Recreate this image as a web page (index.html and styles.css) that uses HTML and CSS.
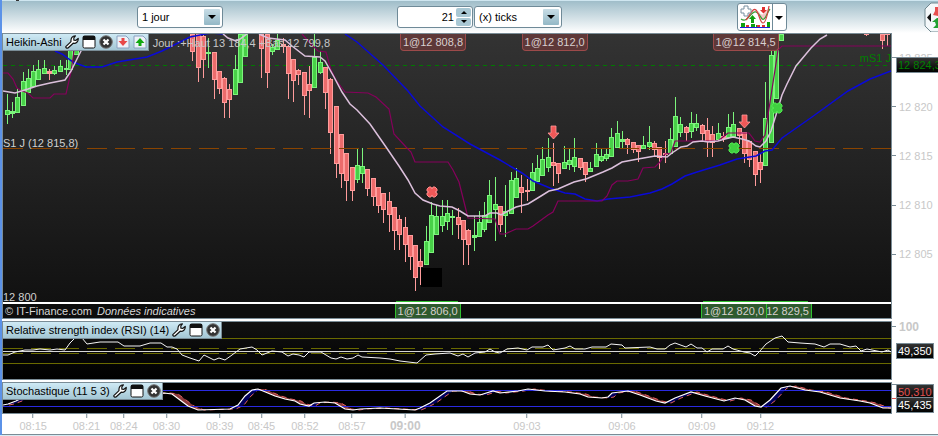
FILE: index.html
```
<!DOCTYPE html>
<html lang="fr">
<head>
  <meta charset="UTF-8" />
  <meta name="viewport" content="width=device-width, initial-scale=1.0">
  <title>Graphique (x) ticks</title>
  <link rel="stylesheet" href="styles.css">
</head>
<body>

  <svg class="symbols" aria-hidden="true">
    <symbol id="wrench" viewBox="0 0 14 14">
      <path d="M0.800 11.600 L6 6.600 C5.600 3.400 7.400 0.700 10.400 0.800 L8.800 2.800 L8.900 5.200 L11 5.300 L13.200 3.400 C13.600 6.600 11 8.800 8.200 8.200 L3 13 C1.800 13.600 0.600 12.700 0.800 11.600 Z" fill="#fff" stroke="#111" stroke-width="1.200" stroke-linejoin="round"/>
    </symbol>
    <symbol id="window" viewBox="0 0 14 14">
      <rect x="1" y="1" width="12" height="12" rx="1.500" fill="#fff" stroke="#111"/>
      <rect x="1" y="1" width="12" height="4" fill="#111"/>
    </symbol>
    <symbol id="close" viewBox="0 0 14 14">
      <circle cx="7" cy="7" r="6.300" fill="#333" stroke="#777"/>
      <path d="M4.500 4.500 L9.500 9.500 M9.500 4.500 L4.500 9.500" stroke="#fff" stroke-width="2.200"/>
    </symbol>
    <symbol id="sell" viewBox="0 0 14 14">
      <path d="M1 1 H10 L13 4 V13 H1 Z" fill="#eef2f8" stroke="#8aa0c0"/>
      <path d="M5.500 3 H8.500 V6 H11.500 L7 11 L2.500 6 H5.500 Z" fill="#e84848"/>
    </symbol>
    <symbol id="buy" viewBox="0 0 14 14">
      <path d="M1 1 H10 L13 4 V13 H1 Z" fill="#eef2f8" stroke="#8aa0c0"/>
      <path d="M5.500 11 H8.500 V8 H11.500 L7 3 L2.500 8 H5.500 Z" fill="#12a812"/>
    </symbol>
  </svg>

  <div class="window">
    <div class="toolbar">
      <span class="select select-period">
        <select aria-label="Période">
          <option>1 jour</option>
        </select>
      </span>
      <div class="unit-group">
        <div class="stepper">
          <input type="text" value="21" aria-label="Nombre de ticks">
          <span class="steps">
            <button class="step step-up" aria-label="Plus"></button>
            <button class="step step-down" aria-label="Moins"></button>
          </span>
        </div>
        <span class="select select-unit">
          <select aria-label="Unité">
            <option>(x) ticks</option>
          </select>
        </span>
      </div>
      <div class="indicator-group">
        <button class="indicator-button" aria-label="Ajouter un indicateur">
          <svg width="32" height="24" viewBox="0 0 32 24">
            <path d="M3 14 C9 18 12 5 17 7 C20 9 20 14 24 15 C27 13 29 7 30 2 C26 9 23 12 20 7 C15 1 11 12 7 15 Z" fill="#f3c6c6"/>
            <path d="M2 14 C9 19 12 5 17 7 S22 16 25 14 S28 7 31 4" fill="none" stroke="#35a035" stroke-width="1.200"/>
            <path d="M7 15 C12 9 14 2 17 5 S21 18 24 18 S29 7 30 1" fill="none" stroke="#d84040" stroke-width="1.200"/>
            <path d="M5 1 H9 V4 H12 V8 H9 V11 H5 V8 H2 V4 H5 Z" fill="#fff" stroke="#7890a0"/>
            <path d="M12 18 V14 H10 L13.500 10 L17 14 H15 V18 Z" fill="#10a010"/>
            <path d="M23 2 H26 V5 H28 L24.500 8.500 L21 5 H23 Z" fill="#e03030"/>
            <path d="M2 18 H6 V22 H2 Z M12 19 H16 V22 H12 Z M17 20 H20 V22 H17 Z M28 17 H31 V22 H28 Z" fill="#10a010"/>
            <path d="M7 20 H10 V22 H7 Z M18 20 H21 V22 H18 Z M23 20 H26 V22 H23 Z" fill="#e03030"/>
            <path d="M1 22.500 H31" stroke="#2020e0"/>
          </svg>
        </button>
        <button class="indicator-more" aria-label="Plus d'indicateurs"></button>
      </div>
      <button class="side-button" aria-label="Passer un ordre">
        <svg width="18" height="30" viewBox="0 0 18 30">
          <path d="M19 1 H7 L1 7 V24 L7 30 H19" fill="#f4f8fa" stroke="#708890"/>
          <path d="M7 11 V20 L3 15.500 Z" fill="#111"/>
          <path d="M11 5 H16 V10 H18 V15 L9 13 L11 9 Z" fill="#e85050"/>
          <path d="M8 20 L13 16 H18 V26 H9 L12 23 L11 20 Z" fill="#20a030"/>
        </svg>
      </button>
    </div>

    <div class="panel">
      <div class="plot price-plot">
        <svg id="price" class="chart" viewBox="3 34 888 268" preserveAspectRatio="none"></svg>
        <div class="head">
          <div class="panel-title">
            <span>Heikin-Ashi</span>
            <svg><use href="#wrench"/></svg>
            <svg><use href="#window"/></svg>
            <svg><use href="#close"/></svg>
            <svg><use href="#sell"/></svg>
            <svg><use href="#buy"/></svg>
          </div>
          <span class="day-range">Jour :+Haut 13 184,4 +Bas 12 799,8</span>
        </div>
        <span class="order order-sell" style="left:44.7%">1@12 808,8</span>
        <span class="order order-sell" style="left:58.4%">1@12 812,0</span>
        <span class="order order-sell" style="left:79.9%">1@12 814,5</span>
        <span class="level level-s1">S1 J (12 815,8)</span>
        <span class="level level-ms1">mS1 J</span>
        <span class="level level-low">12 800</span>
        <div class="credit">
          <span>© IT-Finance.com</span>
          <em>Données indicatives</em>
          <span class="order order-buy" style="left:85.6%">12 829,5</span>
          <span class="order order-buy" style="left:44.1%">1@12 806,0</span>
          <span class="order order-buy" style="left:78.6%">1@12 820,0</span>
        </div>
      </div>
      <div class="scale">
        <span class="tick" style="top:8.6%">12 825</span>
        <span class="tick" style="top:25.8%">12 820</span>
        <span class="tick" style="top:43%">12 815</span>
        <span class="tick" style="top:60.2%">12 810</span>
        <span class="tick" style="top:77.4%">12 805</span>
        <span class="value value-price">12 824,3</span>
      </div>
    </div>

    <div class="panel">
      <div class="plot rsi-plot">
        <svg id="rsi" class="chart" viewBox="3 322 888 57" preserveAspectRatio="none"></svg>
        <div class="head">
          <div class="panel-title">
            <span>Relative strength index (RSI) (14)</span>
            <svg><use href="#wrench"/></svg>
            <svg><use href="#window"/></svg>
            <svg><use href="#close"/></svg>
          </div>
        </div>
      </div>
      <div class="scale">
        <span class="tick tick-strong" style="top:10%">100</span>
        <span class="value value-rsi">49,350</span>
      </div>
    </div>

    <div class="panel">
      <div class="plot stoch-plot">
        <svg id="stoch" class="chart" viewBox="3 383 888 30" preserveAspectRatio="none"></svg>
        <div class="head">
          <div class="panel-title">
            <span>Stochastique (11 5 3)</span>
            <svg><use href="#wrench"/></svg>
            <svg><use href="#window"/></svg>
            <svg><use href="#close"/></svg>
          </div>
        </div>
      </div>
      <div class="scale">
        <span class="tick" style="top:8%"></span>
        <span class="tick tick-red" style="top:50%"></span>
        <span class="value value-d">50,310</span>
        <span class="value value-k">45,435</span>
      </div>
    </div>

    <div class="time-axis">
      <div class="times">
        <span class="time" style="left:3.4%">08:15</span>
        <span class="time" style="left:9.4%">08:21</span>
        <span class="time" style="left:13.6%">08:24</span>
        <span class="time" style="left:18.4%">08:30</span>
        <span class="time" style="left:24.4%">08:39</span>
        <span class="time" style="left:29.1%">08:45</span>
        <span class="time" style="left:34%">08:52</span>
        <span class="time" style="left:39.3%">08:57</span>
        <span class="time time-hour" style="left:45.3%">09:00</span>
        <span class="time" style="left:59%">09:03</span>
        <span class="time" style="left:69.7%">09:06</span>
        <span class="time" style="left:78.7%">09:09</span>
        <span class="time" style="left:85.3%">09:12</span>
      </div>
    </div>
  </div>

  <script src="charts.js"></script>
</body>
</html>
```

FILE: styles.css
```
* {
  box-sizing: border-box;
}

body {
  margin: 0;
  background: #d8ecf4;
  font-family: Arial, "Liberation Sans", sans-serif;
  font-size: 11px;
  color: #000;
}

button {
  padding: 0;
  border: none;
  background: none;
}

.symbols {
  position: absolute;
  width: 0;
  height: 0;
}

.window {
  border-left: 2px solid #5b92e8;
  background: #fff;
}

/* toolbar */
.toolbar {
  position: relative;
  display: grid;
  grid-template-columns: 135px 260px 340px 1fr auto;
  align-items: center;
  height: 33px;
  border-top: 1px solid #cfe6f0;
  background: linear-gradient(#9fbdc9, #fff);
}

.toolbar::before {
  content: "";
  position: absolute;
  top: -1px;
  left: 14px;
  width: 3px;
  height: 1px;
  background: #333;
}

.select {
  position: relative;
  display: block;
  height: 22px;
}

.select-period {
  grid-column: 2;
  width: 86px;
}

.select-unit {
  width: 88px;
}

.select select {
  appearance: none;
  width: 100%;
  height: 22px;
  padding: 0 20px 0 4px;
  border: 1px solid #6f8a98;
  border-radius: 3px;
  background: #fff;
  color: #000;
  font: inherit;
}

.select::before {
  content: "";
  position: absolute;
  top: 3px;
  right: 3px;
  width: 16px;
  height: 16px;
  border-radius: 1px;
  background: linear-gradient(#c8dde6, #93b8c6);
  pointer-events: none;
}

.select::after,
.indicator-more::after {
  content: "";
  position: absolute;
  top: 9px;
  right: 7px;
  border: 4px solid transparent;
  border-top-color: #000;
  border-bottom: none;
  pointer-events: none;
}

.unit-group {
  grid-column: 3;
  display: flex;
  gap: 1px;
}

.stepper {
  display: flex;
  width: 76px;
  height: 22px;
  padding: 1px;
  border: 1px solid #6f8a98;
  border-radius: 3px;
  background: #fff;
}

.stepper input {
  flex: 1;
  min-width: 0;
  padding: 0 2px;
  border: none;
  background: none;
  font: inherit;
  text-align: right;
}

.steps {
  display: flex;
  flex-direction: column;
  gap: 1px;
  width: 15px;
}

.step {
  display: flex;
  flex: 1;
  align-items: center;
  justify-content: center;
  border-radius: 2px;
  background: #a9c8d4;
}

.step::after {
  content: "";
  border: 3px solid transparent;
}

.step-up::after {
  border-bottom-color: #000;
  border-top: none;
}

.step-down::after {
  border-top-color: #000;
  border-bottom: none;
}

.indicator-group {
  grid-column: 4;
  display: flex;
  width: 50px;
  height: 28px;
  border: 1px solid #6f8a98;
  border-radius: 3px;
  background: #fff;
}

.indicator-button {
  display: flex;
  flex: 1;
  align-items: center;
  justify-content: center;
}

.indicator-more {
  position: relative;
  width: 14px;
  border-left: 1px solid #6f8a98;
}

.indicator-more::after {
  top: 12px;
  right: 3px;
}

.side-button {
  display: flex;
  justify-content: flex-start;
  width: 14px;
  overflow: hidden;
}

.side-button svg {
  flex: none;
}

/* panels */
.panel {
  display: grid;
  grid-template-columns: 1fr 46px;
  margin-bottom: 2px;
}

.plot {
  position: relative;
  overflow: hidden;
  border: 1px solid #7a8c96;
}

.chart {
  display: block;
  width: 100%;
}

.price-plot {
  background: linear-gradient(#333, #0f0f0f);
}

.price-plot .chart {
  height: 268px;
}

.rsi-plot {
  background: linear-gradient(#111, #000);
}

.rsi-plot .chart {
  height: 57px;
}

.stoch-plot {
  background: #000;
}

.stoch-plot .chart {
  height: 30px;
}

.head {
  position: absolute;
  top: 0;
  left: 0;
  display: flex;
  align-items: center;
  gap: 4px;
}

.panel-title {
  display: flex;
  align-items: center;
  gap: 3px;
  height: 17px;
  padding: 0 1px 0 3px;
  border-right: 1px solid #7a8c96;
  border-bottom: 1px solid #7a8c96;
  background: linear-gradient(#cfeaf5, #a3c6d4);
}

.panel-title svg {
  width: 14px;
  height: 14px;
}

.day-range {
  color: #c8c8c8;
}

.level {
  position: absolute;
  color: #d0d0d0;
  line-height: 12px;
}

.level-s1 {
  top: 103px;
  left: 0;
}

.level-ms1 {
  top: 18px;
  right: 0;
  color: #008000;
}

.level-low {
  top: 257px;
  left: 0;
}

.order {
  position: absolute;
  top: 0;
  padding: 0 2px;
  line-height: 16px;
  white-space: nowrap;
  color: #d8d0d0;
}

.order-sell {
  border: 1px solid #9c4a4a;
  border-top: none;
  border-radius: 0 0 4px 4px;
  background: #5e3838;
}

.order-buy {
  height: 14px;
  border: 1px solid #30c030;
  border-width: 0 1px;
  background: #2e5a2e;
  line-height: 14px;
}

.credit {
  position: relative;
  display: flex;
  gap: 5px;
  height: 16px;
  padding-left: 2px;
  border-top: 2px solid #fff;
  background: #0d0d0d;
  color: #d8d8d8;
  line-height: 15px;
}

/* right hand scales */
.scale {
  position: relative;
}

.tick {
  position: absolute;
  left: 0;
  display: flex;
  align-items: center;
  gap: 3px;
  height: 14px;
  margin-top: -7px;
  color: #c8c8c8;
}

.tick::before {
  content: "";
  width: 4px;
  height: 1px;
  background: #7a8c96;
}

.tick-red::before {
  background: #e05050;
}

.tick-strong {
  font-size: 12px;
  font-weight: bold;
}

.value {
  position: absolute;
  left: 4px;
  width: 38px;
  height: 16px;
  padding-left: 1px;
  border: 1px solid #7a8c96;
  background: linear-gradient(#333, #000);
  color: #fff;
  line-height: 14px;
  white-space: nowrap;
  overflow: hidden;
}

.value-price {
  top: 24px;
  width: 42px;
  border-right: none;
  color: #008000;
}

.value-rsi {
  top: 22px;
}

.value-d {
  top: 2px;
  color: #e05050;
}

.value-k {
  top: 15px;
}

/* time axis */
.time-axis {
  height: 21px;
  margin-top: -2px;
  padding: 0 47px 0 1px;
  border-bottom: 1px solid #7a8c96;
}

.times {
  position: relative;
}

.time {
  position: absolute;
  top: 0;
  display: flex;
  flex-direction: column;
  align-items: center;
  gap: 2px;
  line-height: 13px;
  color: #c8c8c8;
  transform: translateX(-50%);
}

.time::before {
  content: "";
  width: 1px;
  height: 4px;
  background: #7a8c96;
}

.time-hour {
  font-size: 12px;
  font-weight: bold;
}
```

FILE: charts.js
```
const NS = 'http://www.w3.org/2000/svg';

// x, body top, body bottom, wick top, wick bottom
const up = [
  [7,110,114,94,124],[12,111,113,102,118],[17,97,112,88,112],[23,81,105,72,105],[28,78,92,69,93],
  [33,71,86,65,86],[38,69,79,60,79],[44,68,73,60,73],[54,70,73,66,75],[60,66,71,60,72],[66,68,69,60,75],
  [70,34,69,34,69],[76,34,54,34,54],[208,52,53,38,68],[235,69,94,55,95],[240,34,82,34,83],[245,34,56,34,57],
  [272,47,51,44,55],[277,40,49,34,50],[314,57,87,34,88],[320,62,72,51,74],[357,165,179,149,183],
  [362,166,173,148,183],[426,241,264,226,265],[431,215,252,202,253],[436,216,234,205,235],[442,216,225,200,232],
  [447,213,221,200,230],[452,216,217,210,235],[474,235,237,216,251],[479,222,236,211,237],[484,215,229,202,232],
  [489,195,222,180,223],[495,204,209,177,241],[505,211,215,185,237],[511,180,213,172,214],[516,178,197,168,198],
  [532,172,190,163,191],[537,168,181,155,182],[542,159,175,147,176],[548,157,167,138,172],[564,162,168,146,169],
  [569,160,164,149,170],[574,157,166,138,172],[590,168,171,162,172],[596,154,166,143,167],[601,156,160,149,162],
  [606,154,158,148,161],[611,137,156,128,157],[617,133,147,121,148],[622,139,141,131,149],[643,145,148,136,149],
  [649,142,146,126,150],[670,139,153,128,154],[675,116,146,97,147],[680,124,132,117,137],[691,123,131,112,138],
  [696,123,127,114,131],[718,133,139,123,141],[728,127,137,114,138],[733,124,136,112,138],[765,118,165,82,166],
  [771,55,142,50,143],[776,34,98,34,99],[781,34,40,34,41]
];

const down = [
  [49,71,73,69,80],[192,34,51,34,61],[198,34,67,34,82],[203,36,59,34,78],[214,52,79,52,99],[219,71,88,71,94],
  [224,78,102,77,118],[229,89,99,84,118],[261,34,48,34,78],[267,34,72,34,88],[283,44,46,38,53],[288,46,73,45,99],
  [293,59,80,59,102],[298,70,74,69,85],[304,72,95,72,115],[309,84,90,66,118],[325,67,92,67,109],[330,79,132,78,154],
  [336,106,163,106,178],[341,134,173,134,188],[346,153,180,153,201],[352,167,190,167,201],[367,169,188,169,196],
  [373,178,196,178,206],[378,187,205,187,213],[383,193,209,193,223],[389,201,214,192,232],[394,207,230,207,250],
  [399,219,234,215,250],[405,227,244,217,262],[410,235,256,235,270],[415,245,277,245,291],[420,261,266,249,285],
  [458,217,224,208,239],[463,220,239,220,265],[468,230,244,229,265],[500,206,224,206,232],[521,187,192,175,213],
  [527,190,191,179,201],[553,162,165,143,186],[558,163,173,163,183],[580,158,167,158,170],[585,162,174,162,182],
  [627,139,144,138,154],[633,142,149,142,153],[638,145,151,145,162],[654,143,149,141,156],[659,147,157,147,169],
  [665,153,154,141,163],[686,127,132,126,141],[702,125,133,124,141],[707,130,141,118,157],[712,134,142,126,157],
  [723,136,138,132,142],[739,128,135,128,144],[744,132,153,132,163],[749,141,159,141,167],[755,151,174,151,186],
  [760,162,169,153,183],[866,33,34,33,36],[882,34,40,34,49],[887,33,34,33,46]
];

const slow = [
  '55,51 62,54 73,62 86,67 102,67 117,62 147,57 162,51 180,42 190,37 205,34 212,33 223,34 226,33',
  '345,34 357,42 383,65 408,91 420,106 443,127 470,144 500,160 515,169 522,173 533,181 550,188 565,193 575,194 585,199 597,201 608,199 630,197 650,193 662,189 672,184 685,176 697,172 720,165 737,159 756,156 765,151 772,150 782,138 812,117 848,91 870,79 891,71'
];

const stop = [
  '3,73 8,73 13,79 17,88 22,91 28,93 33,98 50,98 54,94 66,94 71,72 74,51 78,34',
  '302,34 311,44 318,51 326,52 331,70 336,80 345,92 368,93 376,97 389,109 394,134 406,147 411,152 415,162 448,162 453,170 459,182 463,198 468,218 495,219 500,234 505,234 516,229 528,229 533,226 548,215 553,212 558,201 602,201 607,196 612,185 617,181 628,181 638,179 643,168 655,167 660,162 665,154 671,153 675,141 718,141 723,137 728,133 749,133 755,141 760,142 765,135 770,102 775,70 778,50 782,46 891,46'
];

const average = [
  '3,91 15,93 28,89 37,86 50,83 65,80 71,71 76,61 82,49 88,34',
  '223,34 228,38 236,41 240,39 247,34',
  '259,34 268,38 285,40 292,46 305,56 320,57 325,61 334,77 342,92 350,104 357,110 370,124 386,147 399,166 408,180 415,193 423,200 433,204 440,206 452,207 460,211 468,216 485,216 490,213 497,213 501,215 508,211 516,207 528,204 541,196 549,191 558,189 574,182 586,179 603,172 612,168 622,162 638,159 655,156 667,157 672,153 681,147 687,146 693,142 702,141 708,142 718,141 725,139 733,137 742,139 749,141 756,146 760,147 766,141 771,131 776,115 782,95 787,84 796,66 811,48 820,39 827,35'
];

const rsi = '3,355 8,355 15,352 25,350 33,350 40,349 50,350 57,349 65,350 70,343 75,338 82,338 87,344 100,342 118,342 124,346 140,346 150,343 161,343 167,347 172,347 177,349 182,355 190,358 199,361 204,355 214,360 219,358 225,360 232,355 240,349 252,347 257,350 262,355 272,351 282,352 288,356 293,354 299,355 304,357 309,352 321,352 331,358 336,359 341,357 347,359 353,358 358,355 362,357 380,358 390,359 400,361 417,363 426,355 435,354 450,353 458,356 463,354 468,357 475,353 485,352 490,349 495,352 500,353 507,349 518,348 527,350 532,347 543,347 548,345 553,350 565,348 570,346 575,349 585,349 592,347 606,347 611,344 622,345 625,348 650,347 657,349 665,349 670,345 675,343 686,347 691,344 697,348 702,348 707,352 712,349 723,349 728,346 733,349 744,352 750,353 755,356 760,351 766,344 775,338 782,336 788,342 800,343 815,344 824,347 830,344 840,344 850,347 856,346 861,351 867,349 882,352 888,350 891,352';

const stochK = '3,405 8,404 16,401 22,398 164,393 172,394 180,400 188,406 198,410 230,409 238,405 245,396 252,390 258,389 263,391 275,396 285,399 295,401 300,404 309,406 314,403 325,402 335,403 345,409 353,410 360,409 380,408 415,410 420,408 430,403 447,391 462,391 470,394 480,395 493,391 500,393 518,391 528,389 545,391 565,392 580,394 588,397 602,398 608,397 612,393 628,391 640,395 656,401 665,403 675,398 691,392 705,396 724,401 735,398 745,400 755,406 761,407 770,400 781,388 790,386 805,390 820,392 840,398 860,401 870,403 883,408 891,408';

function add(svg, name, attrs) {
  const el = document.createElementNS(NS, name);
  for (const key in attrs) el.setAttribute(key, attrs[key]);
  svg.appendChild(el);
}

function line(svg, points, color, width) {
  add(svg, 'polyline', { points, fill: 'none', stroke: color, 'stroke-width': width });
}

function level(svg, y, color, dash) {
  add(svg, 'path', { d: `M3 ${y + 0.5} H891`, stroke: color, 'stroke-dasharray': dash || 'none' });
}

function candles(svg, list, light, dark) {
  list.forEach(([x, top, bottom, high, low]) => {
    add(svg, 'rect', { x: x, y: high, width: 1, height: low - high, fill: light });
    add(svg, 'rect', { x: x - 2, y: top, width: 5, height: bottom - top + 1, fill: light });
    if (bottom - top > 2) {
      add(svg, 'rect', { x: x - 1, y: top + 1, width: 3, height: bottom - top - 1, fill: dark });
    }
  });
}

function arrow(svg, x, y) {
  add(svg, 'path', {
    d: `M${x - 2.5} ${y} h5 v7 h3 l-5.5 6 l-5.5 -6 h3 Z`,
    fill: '#f05858', stroke: '#ff9c9c', 'stroke-width': 0.8
  });
}

function cross(svg, x, y, fill, stroke) {
  add(svg, 'path', {
    d: `M${x - 5} ${y - 3} l2 -2 h2 l1 2 l1 -2 h2 l2 2 v2 l-2 1 l2 1 v2 l-2 2 h-2 l-1 -2 l-1 2 h-2 l-2 -2 v-2 l2 -1 l-2 -1 Z`,
    fill, stroke, 'stroke-width': 1
  });
}

function drawPrice() {
  const svg = document.getElementById('price');
  level(svg, 65, '#007800', '4 4');
  candles(svg, up, '#7cf57c', '#48d048');
  candles(svg, down, '#ff9c9c', '#ec6c6c');
  level(svg, 148, '#8a4400', '20 8');
  slow.forEach(p => line(svg, p, '#0a0ad8', 1.5));
  stop.forEach(p => line(svg, p, '#86005c', 1.2));
  average.forEach(p => line(svg, p, '#dcc0dc', 1.5));
  add(svg, 'rect', { x: 421, y: 268, width: 21, height: 19, fill: '#000' });
  arrow(svg, 553.5, 126);
  arrow(svg, 744.5, 115);
  cross(svg, 432, 192, '#f05858', '#ff8c8c');
  cross(svg, 734, 148, '#40d040', '#50e850');
  cross(svg, 777, 108, '#40d040', '#50e850');
  // tops of the buy labels
  add(svg, 'path', { d: 'M396 301.5 H458 M703 301.5 H808', stroke: '#30c030' });
}

function drawRsi() {
  const svg = document.getElementById('rsi');
  level(svg, 338, '#6a6a00');
  level(svg, 363, '#6a6a00');
  level(svg, 348, '#6a6a00', '20 8');
  level(svg, 353, '#6a6a00', '20 8');
  level(svg, 351, '#d8d8d8');
  line(svg, rsi, '#f4f4f4', 1);
}

function drawStoch() {
  const svg = document.getElementById('stoch');
  const k = stochK.split(' ').map(p => p.split(',').map(Number));
  const d = k.map(([x, y]) => [x + 6, y]);
  // band between the two curves: blue while rising, red while falling
  for (let i = 0; i < k.length - 1; i++) {
    add(svg, 'polygon', {
      points: [k[i], k[i + 1], d[i + 1], d[i]].join(' '),
      fill: k[i + 1][1] < k[i][1] ? '#00005c' : '#8c3a3a'
    });
  }
  add(svg, 'polyline', { points: d.join(' '), fill: 'none', stroke: '#e06060', 'stroke-dasharray': '5 4' });
  level(svg, 390, '#2a2ae0');
  level(svg, 406, '#2a2ae0');
  line(svg, stochK, '#fff', 1.2);
}

drawPrice();
drawRsi();
drawStoch();
```
